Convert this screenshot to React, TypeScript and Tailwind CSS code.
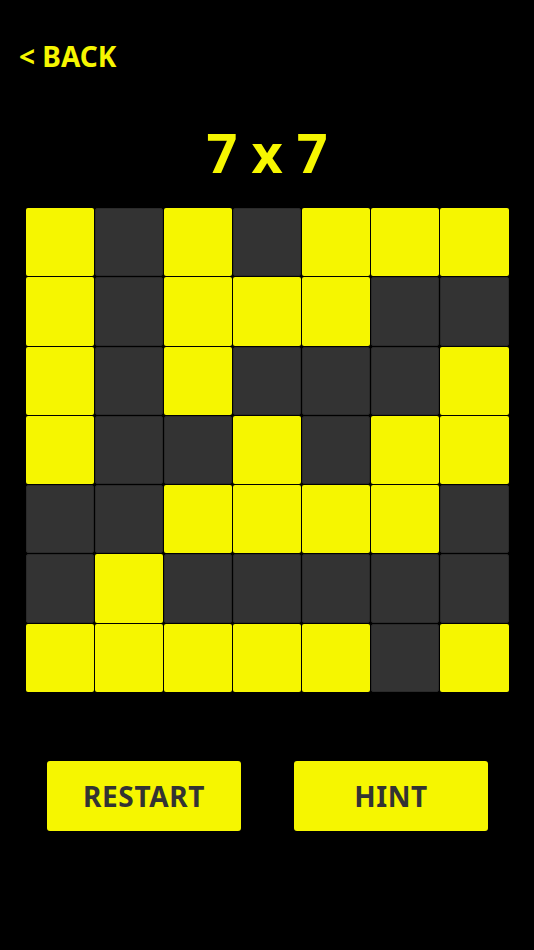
import React from 'react';

const Y = 1;
const D = 0;

const board = [
    [Y, D, Y, D, Y, Y, Y],
    [Y, D, Y, Y, Y, D, D],
    [Y, D, Y, D, D, D, Y],
    [Y, D, D, Y, D, Y, Y],
    [D, D, Y, Y, Y, Y, D],
    [D, Y, D, D, D, D, D],
    [Y, Y, Y, Y, Y, D, Y],
];

export default function App() {
    return (
        <div className="bg-black min-h-screen w-[534px] h-[950px] flex flex-col font-['Noto_Sans',sans-serif]">
            {/* Header */}
            <div className="pt-[36px] pl-[19px]">
                <button className="text-[#f6f600] text-[28px] font-bold leading-[40px]">&lt; BACK</button>
            </div>

            <h1 className="mt-[46px] text-center text-[#f6f600] text-[54px] font-bold leading-[60px]">7 x 7</h1>

            {/* Board */}
            <div className="mt-[26px] mx-auto w-[483px] grid grid-cols-7 gap-px">
                {board.flat().map((cell, i) => (
                    <div
                        key={i}
                        className={
                            cell
                                ? "h-[68.3px] rounded-[2px] bg-[#f6f600]"
                                : "h-[68.3px] rounded-[2px] bg-[#333333] border border-[#2a2a2a]"
                        }
                    />
                ))}
            </div>

            {/* Actions */}
            <div className="mt-[69px] flex justify-center gap-[53px] pl-[1px]">
                <button className="w-[194px] h-[70px] rounded-[3px] bg-[#f6f600] text-[#333333] text-[28px] font-bold tracking-[0.6px]">RESTART</button>
                <button className="w-[194px] h-[70px] rounded-[3px] bg-[#f6f600] text-[#333333] text-[28px] font-bold tracking-[0.6px]">HINT</button>
            </div>
        </div>
    );
}
